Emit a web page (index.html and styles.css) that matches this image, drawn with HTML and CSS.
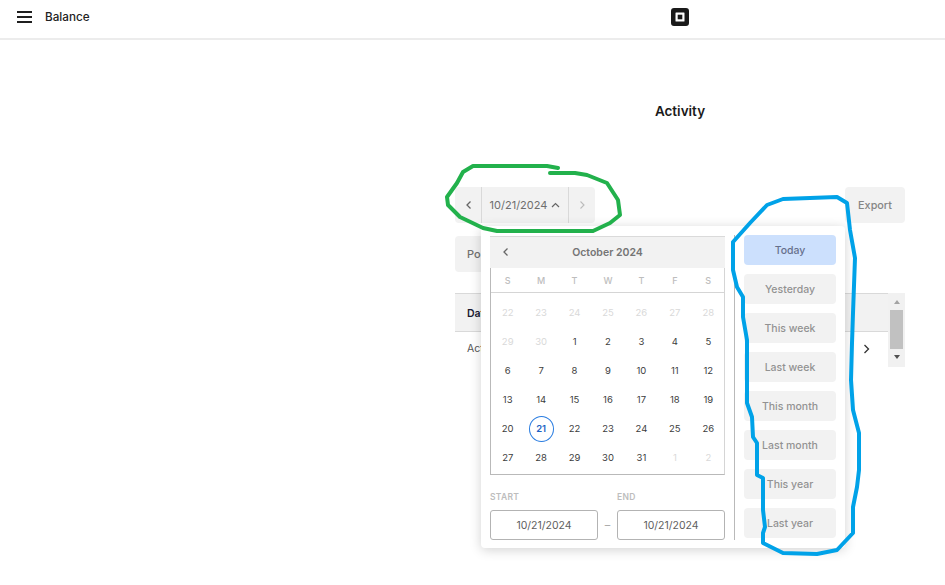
FILE: index.html
```html
<!DOCTYPE html>
<html lang="en">
<head>
<meta charset="utf-8">
<title>Balance - Activity</title>
<link rel="stylesheet" href="styles.css">
</head>
<body>
<header class="topbar">
  <div class="topbar-left">
    <svg class="menu-icon" width="15" height="12" viewBox="0 0 15 12"><path d="M0 1h15M0 6h15M0 11h15" stroke="#1f1f1f" stroke-width="1.8" fill="none"/></svg>
    <span class="topbar-title">Balance</span>
  </div>
  <div class="topbar-center">
    <svg width="18" height="18" viewBox="0 0 18 18"><path fill-rule="evenodd" d="M3 0h12a3 3 0 0 1 3 3v12a3 3 0 0 1-3 3H3a3 3 0 0 1-3-3V3a3 3 0 0 1 3-3zM5 4.500a.5.5 0 0 0-.5.500v8a.5.5 0 0 0 .5.500h8a.5.5 0 0 0 .5-.5V5a.5.5 0 0 0-.5-.5z" fill="#1a1a1a"/><rect x="6.700" y="6.700" width="4.600" height="4.600" fill="#1a1a1a"/></svg>
  </div>
</header>
<main class="main">
  <h1 class="page-title">Activity</h1>
  <div class="toolbar">
    <div class="date-nav">
      <button class="nav-btn"><svg width="7" height="10" viewBox="0 0 7 10"><path d="M5.500 1.500L2 5l3.500 3.500" stroke="#666" stroke-width="1.300" fill="none"/></svg></button>
      <button class="date-btn">10/21/2024 <svg width="9" height="6" viewBox="0 0 9 6"><path d="M1 5l3.500-3.500L8 5" stroke="#666" stroke-width="1.200" fill="none"/></svg></button>
      <button class="nav-btn nav-next"><svg width="7" height="10" viewBox="0 0 7 10"><path d="M1.500 1.500L5 5 1.500 8.500" stroke="#bbb" stroke-width="1.100" fill="none"/></svg></button>
    </div>
    <button class="export">Export</button>
  </div>
  <div class="filter-row"><button class="filter">Po</button></div>
  <div class="table-wrap">
    <div class="table">
      <div class="table-head">Dat</div>
      <div class="table-row">
        <span>Act</span>
        <svg width="7" height="10" viewBox="0 0 7 10"><path d="M1.500 1l4 4-4 4" stroke="#333" stroke-width="1.300" fill="none"/></svg>
      </div>
    </div>
    <div class="scrollbar">
      <span class="arrow-up"></span>
      <span class="thumb"></span>
      <span class="arrow-down"></span>
    </div>
  </div>

  <section class="popover">
    <div class="calendar-col">
      <div class="calendar">
        <div class="cal-head">
          <svg width="7" height="10" viewBox="0 0 7 10"><path d="M5.500 1.500L2 5l3.500 3.500" stroke="#666" stroke-width="1.300" fill="none"/></svg>
          <span class="cal-month">October 2024</span>
        </div>
        <div class="cal-weekdays">
          <span>S</span><span>M</span><span>T</span><span>W</span><span>T</span><span>F</span><span>S</span>
        </div>
        <div class="cal-days">
          <span class="muted">22</span><span class="muted">23</span><span class="muted">24</span><span class="muted">25</span><span class="muted">26</span><span class="muted">27</span><span class="muted">28</span>
          <span class="muted">29</span><span class="muted">30</span><span>1</span><span>2</span><span>3</span><span>4</span><span>5</span>
          <span>6</span><span>7</span><span>8</span><span>9</span><span>10</span><span>11</span><span>12</span>
          <span>13</span><span>14</span><span>15</span><span>16</span><span>17</span><span>18</span><span>19</span>
          <span>20</span><span class="today"><b>21</b></span><span>22</span><span>23</span><span>24</span><span>25</span><span>26</span>
          <span>27</span><span>28</span><span>29</span><span>30</span><span>31</span><span class="muted">1</span><span class="muted">2</span>
        </div>
      </div>
      <div class="range">
        <label class="range-field"><span class="range-label">START</span><span class="range-input">10/21/2024</span></label>
        <span class="range-dash">–</span>
        <label class="range-field"><span class="range-label">END</span><span class="range-input">10/21/2024</span></label>
      </div>
    </div>
    <div class="presets">
      <button class="preset active">Today</button>
      <button class="preset">Yesterday</button>
      <button class="preset">This week</button>
      <button class="preset">Last week</button>
      <button class="preset">This month</button>
      <button class="preset">Last month</button>
      <button class="preset">This year</button>
      <button class="preset">Last year</button>
    </div>
  </section>
</main>

<svg class="scribbles" width="945" height="585" viewBox="0 0 945 585">
  <path class="green" d="M558 168L547 166H473L463 172L457 183L447 197L448 205L460 217L483 228L497 231H593L610 223L620 215L618 200L607 183L587 175L575 173L550 173"/>
  <path class="blue" d="M837 197L783 199L767 205L750 223L733 242L733 270L737 287L743 297L743 317L747 340L747 380L747 403L752 417L753 437L757 443L757 475L763 478L763 510L765 527L763 533L763 543L783 553L817 554L837 550L853 533L853 507L857 487L859 470L859 433L853 410L851 380L852 343L853 313L855 258L850 230L847 203Z"/>
</svg>
</body>
</html>
```
FILE: styles.css
```css
* { box-sizing: border-box; }
html, body { margin: 0; padding: 0; }
body {
  width: 945px;
  height: 585px;
  overflow: hidden;
  background: #fff;
  color: #1a1a1a;
  font-family: Inter, "Liberation Sans", sans-serif;
  font-size: 11px;
  position: relative;
}
button { font-family: inherit; border: 0; margin: 0; padding: 0; }

.topbar {
  display: grid;
  grid-template-columns: 455px 450px;
  height: 40px;
  border-bottom: 2px solid #ececec;
}
.topbar-left { display: flex; align-items: center; padding: 0 0 4px 17px; }
.menu-icon { margin-right: 13px; }
.topbar-title { font-size: 11.700px; font-weight: 500; color: #222; }
.topbar-center { display: flex; align-items: center; justify-content: center; padding-bottom: 4px; }

.main {
  position: relative;
  width: 450px;
  margin-left: 455px;
}
.page-title {
  margin: 0;
  padding-top: 63px;
  height: 147px;
  text-align: center;
  font-size: 13.500px;
  line-height: 17px;
  font-weight: 600;
  color: #1a1a1a;
}
.toolbar { display: flex; justify-content: space-between; height: 36px; }
.date-nav {
  display: flex;
  width: 140px;
  background: #f2f2f2;
  border-radius: 4px;
}
.nav-btn {
  display: flex;
  align-items: center;
  justify-content: center;
  width: 27px;
  background: transparent;
  border-right: 1px solid #d9d9d9;
}
.nav-next { width: 26px; border-right: 0; }
.date-btn {
  display: flex;
  align-items: center;
  justify-content: center;
  gap: 4px;
  width: 87px;
  background: transparent;
  border-right: 1px solid #d9d9d9;
  font-size: 11px;
  color: #6e6e6e;
}
.export {
  width: 60px;
  background: #f2f2f2;
  border-radius: 4px;
  font-size: 10.800px;
  font-weight: 500;
  color: #858585;
}
.filter-row { margin-top: 13px; height: 36px; }
.filter {
  width: 120px;
  height: 36px;
  background: #f2f2f2;
  border-radius: 4px;
  text-align: left;
  padding-left: 12px;
  font-size: 11px;
  font-weight: 500;
  color: #707070;
}
.table-wrap { display: flex; margin-top: 21px; height: 74px; }
.table { width: 433px; }
.table-head {
  height: 39px;
  padding: 13px 12px 0;
  background: #f2f2f2;
  border-top: 1px solid #d9d9d9;
  border-bottom: 1px solid #d9d9d9;
  font-size: 10.500px;
  font-weight: 600;
  color: #1a1a33;
}
.table-row {
  display: flex;
  justify-content: space-between;
  align-items: center;
  height: 33px;
  padding: 0 18px 0 12px;
  font-size: 10.500px;
  color: #555;
}
.scrollbar {
  display: flex;
  flex-direction: column;
  align-items: center;
  width: 17px;
  height: 74px;
  background: #f1f1f1;
}
.arrow-up {
  margin-top: 7px;
  border: 3.500px solid transparent;
  border-top: 0;
  border-bottom: 4px solid #a3a3a3;
}
.thumb { width: 13px; height: 39px; margin-top: 6px; background: #c1c1c1; }
.arrow-down {
  margin-top: 6px;
  border: 3.500px solid transparent;
  border-bottom: 0;
  border-top: 4px solid #505050;
}

.popover {
  position: absolute;
  left: 26px;
  top: 186px;
  width: 364px;
  height: 322px;
  display: flex;
  padding: 10px 9px 8px;
  background: #fff;
  border-radius: 4px;
  box-shadow: 0 2px 12px rgba(0, 0, 0, 0.18);
}
.calendar-col { width: 235px; display: flex; flex-direction: column; }
.calendar {
  height: 239px;
  border-left: 1px solid #b9b9b9;
  border-right: 1px solid #d5d5d5;
  border-bottom: 1px solid #b9b9b9;
}
.cal-head {
  display: flex;
  align-items: center;
  height: 32px;
  padding: 0 0 1px 12px;
  margin-left: -1px;
  margin-right: -1px;
  background: #f2f2f2;
  border-top: 1px solid #dadada;
}
.cal-month {
  flex: 1;
  text-align: center;
  padding-right: 19px;
  font-weight: 600;
  font-size: 10.500px;
  color: #757575;
}
.cal-weekdays {
  display: grid;
  grid-template-columns: repeat(7, 1fr);
  height: 25px;
  align-items: center;
  margin-right: -1px;
  border-bottom: 1px solid #d5d5d5;
  text-align: center;
  font-size: 9px;
  font-weight: 500;
  color: #bdbdbd;
}
.cal-days {
  display: grid;
  grid-template-columns: repeat(7, 1fr);
  grid-auto-rows: 29px;
  margin-right: -1px;
  padding-top: 5px;
  text-align: center;
  font-size: 9.500px;
  color: #3d3d3d;
}
.cal-days span { display: flex; align-items: center; justify-content: center; }
.cal-days .muted { color: #d9d9d9; }
.cal-days .today b {
  display: flex;
  align-items: center;
  justify-content: center;
  width: 25px;
  height: 26px;
  border: 1px solid #2a7de1;
  border-radius: 50%;
  color: #1c62c4;
  font-weight: 600;
}
.range { display: flex; align-items: flex-end; margin-top: 14px; }
.range-field { display: flex; flex-direction: column; width: 108px; }
.range-label {
  height: 21px;
  padding-top: 3px;
  font-size: 8.500px;
  font-weight: 600;
  letter-spacing: 0.3px;
  color: #bdbdbd;
}
.range-input {
  display: flex;
  align-items: center;
  justify-content: center;
  height: 30px;
  border: 1px solid #b3b3b3;
  border-radius: 3px;
  font-size: 10.500px;
  color: #5e5e5e;
}
.range-dash { width: 19px; height: 30px; line-height: 30px; text-align: center; color: #aaa; }
.presets {
  display: flex;
  flex-direction: column;
  gap: 9px;
  width: 102px;
  margin: -1px 0 0 9px;
  padding-left: 9px;
  height: 305px;
  border-left: 1px solid #b9b9b9;
}
.preset {
  width: 92px;
  height: 30px;
  flex: none;
  background: #f2f2f2;
  border-radius: 4px;
  font-size: 10.500px;
  font-weight: 500;
  color: #929292;
}
.preset.active { background: #cce0fd; color: #66708c; }

.scribbles { position: absolute; left: 0; top: 0; pointer-events: none; }
.green, .blue { fill: none; stroke-width: 4; stroke-linejoin: round; stroke-linecap: round; }
.green { stroke: #22b14c; }
.blue { stroke: #00a2e8; }
```
